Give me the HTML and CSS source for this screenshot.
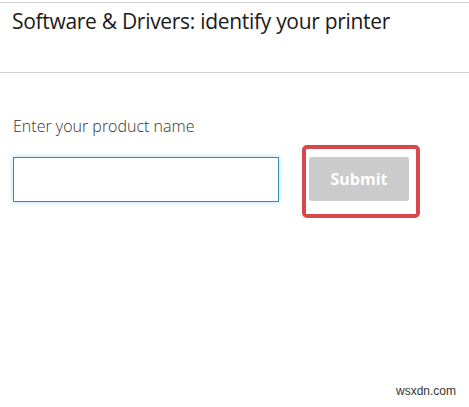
FILE: index.html
```html
<!DOCTYPE html>
<html>
<head>
<meta charset="utf-8">
<link rel="stylesheet" href="styles.css">
</head>
<body>
<div class="page">
  <header class="head">
    <h1 class="title">Software &amp; Drivers: identify your printer</h1>
  </header>
  <section class="form">
    <label class="label" for="prod">Enter your product name</label>
    <div class="row">
      <input class="input" id="prod" type="text">
      <div class="highlight">
        <button class="submit" type="button">Submit</button>
      </div>
    </div>
  </section>
  <div class="wm">wsxdn.com</div>
</div>
</body>
</html>
```
FILE: styles.css
```css
html, body {
  margin: 0;
  padding: 0;
  background: #fff;
}
.page {
  width: 469px;
  height: 407px;
  position: relative;
  font-family: "Open Sans", "Noto Sans", sans-serif;
  color: #1a1a1a;
}
.head {
  margin-top: 2px;
  border-top: 1px solid #d2d2d2;
  border-bottom: 1px solid #cfcfcf;
  height: 71px;
  box-sizing: border-box;
  padding: 4px 0 0 12px;
}
.title {
  margin: 0;
  font-size: 21px;
  font-weight: 400;
  line-height: 28px;
  letter-spacing: -0.3px;
}
.form {
  padding: 43px 0 0 13px;
}
.label {
  display: block;
  font-size: 16px;
  line-height: 20px;
  color: #333;
  font-weight: 300;
}
.row {
  display: flex;
  align-items: flex-start;
  margin-top: 1px;
}
.input {
  box-sizing: border-box;
  width: 266px;
  height: 45px;
  margin-top: 20px;
  border: 1px solid #2f8fb3;
  box-shadow: 0 0 5px rgba(80, 180, 230, 0.45);
  outline: none;
  padding: 0 8px;
}
.highlight {
  margin-left: 23px;
  margin-top: 8px;
  width: 118px;
  height: 73px;
  box-sizing: border-box;
  border: 4px solid #d8474a;
  border-radius: 5px;
  padding: 8px 0 0 3px;
}
.submit {
  width: 100px;
  height: 44px;
  border: none;
  border-radius: 3px;
  background: #cbcbcb;
  color: #fff;
  font-family: "Open Sans", "Noto Sans", sans-serif;
  font-weight: 700;
  font-size: 16px;
  padding: 0;
}
.wm {
  position: absolute;
  right: 13px;
  bottom: 11px;
  font-family: "Liberation Sans", sans-serif;
  font-size: 12px;
  color: #333;
}
```
